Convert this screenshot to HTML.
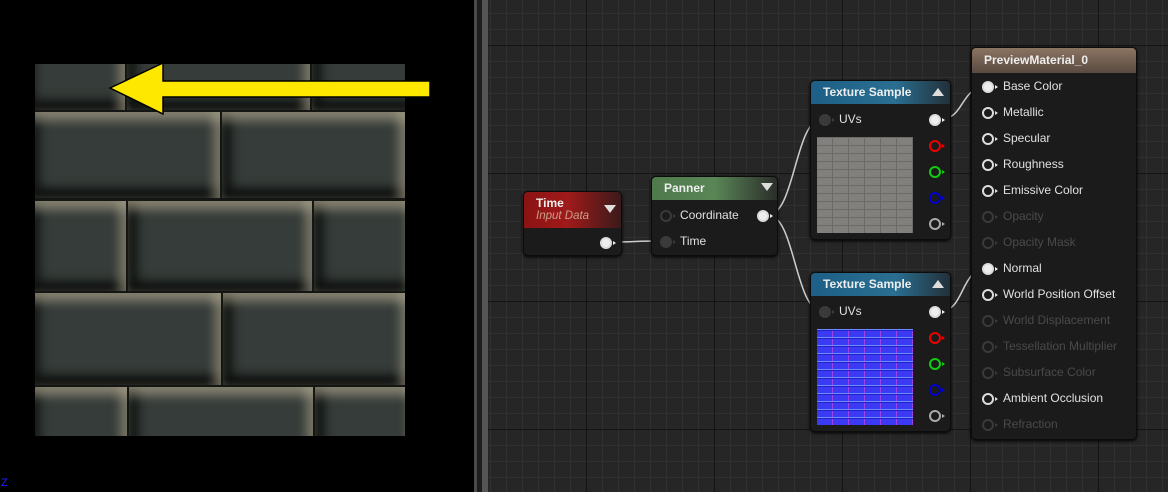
<!DOCTYPE html><html><head><style>
*{margin:0;padding:0;box-sizing:border-box}
body{width:1168px;height:492px;overflow:hidden;background:#000;font-family:"Liberation Sans",sans-serif;position:relative}
.a{position:absolute}
.stone{position:absolute;left:35px;top:64px;width:370px;height:372px;background:#141614;overflow:hidden}
.b{position:absolute;background:#363c39;box-shadow:inset 0 12px 10px -3px rgba(190,180,155,.55),inset -10px 0 9px -2px rgba(185,175,150,.45),inset 0 -12px 10px -2px #0e100f,inset 12px 0 10px -2px #141816}
.grid{position:absolute;left:488px;top:0;width:680px;height:492px;background-color:#262626;
background-image:linear-gradient(#141414 1px,transparent 1px),linear-gradient(90deg,#141414 1px,transparent 1px),linear-gradient(#303030 1px,transparent 1px),linear-gradient(90deg,#303030 1px,transparent 1px);
background-size:128px 128px,128px 128px,16px 16px,16px 16px;background-position:0 45px,98px 0,0 13px,2px 0}
.node{position:absolute;background:#1b1b1b;border:1px solid #0c0c0c;border-radius:5px;box-shadow:0 1px 3px #000;color:#ddd;font-size:12px}
.hd{position:absolute;left:0;top:0;right:0;border-radius:4px 4px 0 0;color:#eee;font-weight:bold;font-size:12px;padding:4px 12px}
.tri{position:absolute;width:0;height:0;border-left:6px solid transparent;border-right:6px solid transparent}
.pin{position:absolute;width:12px;height:12px;border-radius:50%;border:2px solid #ddd}
.pin:after{content:"";position:absolute;right:-6px;top:2px;border-left:3px solid currentColor;border-top:2.5px solid transparent;border-bottom:2.5px solid transparent}
.f{background:#eee;color:#eee}
.o{color:#ddd}
.d{border-color:#3a3a3a;color:#3a3a3a}
.lbl{position:absolute;font-size:12px;color:#e0e0e0}
.dim{color:#4a4a4a}
</style></head><body>
<div class="stone">
<div class="b" style="left:-10px;top:-40px;width:100px;height:86px"></div>
<div class="b" style="left:92px;top:-40px;width:183px;height:86px"></div>
<div class="b" style="left:277px;top:-40px;width:183px;height:86px"></div>
<div class="b" style="left:-5px;top:48px;width:190px;height:86px"></div>
<div class="b" style="left:187px;top:48px;width:183px;height:86px"></div>
<div class="b" style="left:-5px;top:137px;width:96px;height:90px"></div>
<div class="b" style="left:93px;top:137px;width:184px;height:90px"></div>
<div class="b" style="left:279px;top:137px;width:100px;height:90px"></div>
<div class="b" style="left:-5px;top:229px;width:191px;height:92px"></div>
<div class="b" style="left:188px;top:229px;width:184px;height:92px"></div>
<div class="b" style="left:-5px;top:323px;width:97px;height:90px"></div>
<div class="b" style="left:94px;top:323px;width:184px;height:90px"></div>
<div class="b" style="left:280px;top:323px;width:100px;height:90px"></div>
</div>
<svg class="a" style="left:0;top:0" width="474" height="492">
<polygon points="110,88 163,63 163,81 430,81 430,97 163,97 163,114" fill="#ffe800" stroke="#000" stroke-width="1.5"/>
<text x="1" y="486" fill="#2020ff" font-size="11" font-family="Liberation Sans">Z</text>
</svg>
<div class="a" style="left:474px;top:0;width:14px;height:492px;background:#1e1e1e"></div>
<div class="a" style="left:474px;top:0;width:3px;height:492px;background:#4a4a4a"></div>
<div class="a" style="left:482px;top:0;width:6px;height:492px;background:#555"></div>
<div class="grid"></div>
<svg class="a" style="left:0;top:0" width="1168" height="492" fill="none" stroke="#ccc" stroke-width="1.5">
<path d="M611,242 C640,242 630,241 662,241"/>
<path d="M768,215 C795,215 795,119 822,119"/>
<path d="M768,215 C795,215 795,311 822,311"/>
<path d="M941,119 C965,119 960,86 988,86"/>
<path d="M941,311 C965,311 960,268 988,268"/>
</svg>
<div class="node" style="left:523px;top:191px;width:99px;height:65px">
<div class="hd" style="height:36px;background:linear-gradient(90deg,#8b1313 0%,#a01a1a 45%,#3a1a1a 100%)">Time<div style="font-weight:normal;font-style:italic;color:#c9a08a;font-size:11.5px">Input Data</div></div>
<div class="tri" style="left:80px;top:13px;border-top:8px solid #ddd"></div>
<div class="pin f" style="left:76px;top:45px"></div>
</div>
<div class="node" style="left:651px;top:176px;width:127px;height:80px">
<div class="hd" style="height:23px;background:linear-gradient(90deg,#4e7a4c 0%,#5a8656 50%,#2a2e2a 100%)">Panner</div>
<div class="tri" style="left:109px;top:6px;border-top:8px solid #ddd"></div>
<div class="pin d" style="left:8px;top:33px"></div><div class="lbl" style="left:28px;top:31px">Coordinate</div>
<div class="pin f" style="left:105px;top:33px"></div>
<div class="pin" style="left:8px;top:59px;background:#3a3a3a;border-color:#3a3a3a;color:#3a3a3a"></div><div class="lbl" style="left:28px;top:57px">Time</div>
</div>
<div class="node" style="left:810px;top:80px;width:141px;height:160px">
<div class="hd" style="height:23px;background:linear-gradient(90deg,#1d5f86 0%,#2a6f92 60%,#223038 100%)">Texture Sample</div>
<div class="tri" style="left:121px;top:7px;border-bottom:8px solid #ddd"></div>
<div class="pin" style="left:8px;top:33px;background:#3a3a3a;border-color:#3a3a3a;color:#3a3a3a"></div><div class="lbl" style="left:28px;top:31px">UVs</div>
<div class="pin f" style="left:118px;top:33px"></div>
<div class="pin" style="left:118px;top:59px;border-color:#e00;color:#e00"></div>
<div class="pin" style="left:118px;top:85px;border-color:#1c1;color:#1c1"></div>
<div class="pin" style="left:118px;top:111px;border-color:#00c;color:#00c"></div>
<div class="pin o" style="left:118px;top:137px;border-color:#aaa;color:#aaa"></div>
<div class="a" style="left:6px;top:56px;width:96px;height:96px;background-color:#82807c;background-image:repeating-linear-gradient(#6c6a68 0 1px,transparent 1px 8px),repeating-linear-gradient(90deg,transparent 0 15px,#6c6a68 15px 16px)"></div>
</div>
<div class="node" style="left:810px;top:272px;width:141px;height:160px">
<div class="hd" style="height:23px;background:linear-gradient(90deg,#1d5f86 0%,#2a6f92 60%,#223038 100%)">Texture Sample</div>
<div class="tri" style="left:121px;top:7px;border-bottom:8px solid #ddd"></div>
<div class="pin" style="left:8px;top:33px;background:#3a3a3a;border-color:#3a3a3a;color:#3a3a3a"></div><div class="lbl" style="left:28px;top:31px">UVs</div>
<div class="pin f" style="left:118px;top:33px"></div>
<div class="pin" style="left:118px;top:59px;border-color:#e00;color:#e00"></div>
<div class="pin" style="left:118px;top:85px;border-color:#1c1;color:#1c1"></div>
<div class="pin" style="left:118px;top:111px;border-color:#00c;color:#00c"></div>
<div class="pin o" style="left:118px;top:137px;border-color:#aaa;color:#aaa"></div>
<div class="a" style="left:6px;top:56px;width:96px;height:96px;background-color:#3a3af2;background-image:repeating-linear-gradient(#6a8aff 0 1px,#2222c8 1px 2px,transparent 2px 8px),repeating-linear-gradient(90deg,transparent 0 15px,#a040e0 15px 16px)"></div>
</div>
<div class="node" style="left:971px;top:47px;width:166px;height:393px">
<div class="hd" style="height:25px;background:linear-gradient(180deg,#8a7462 0%,#5a4a40 100%);padding-top:5px">PreviewMaterial_0</div>
<div class="pin f" style="left:10px;top:33px"></div><div class="lbl" style="left:31px;top:31px">Base Color</div>
<div class="pin" style="left:10px;top:59px"></div><div class="lbl" style="left:31px;top:57px">Metallic</div>
<div class="pin" style="left:10px;top:85px"></div><div class="lbl" style="left:31px;top:83px">Specular</div>
<div class="pin" style="left:10px;top:111px"></div><div class="lbl" style="left:31px;top:109px">Roughness</div>
<div class="pin" style="left:10px;top:137px"></div><div class="lbl" style="left:31px;top:135px">Emissive Color</div>
<div class="pin d" style="left:10px;top:163px"></div><div class="lbl dim" style="left:31px;top:161px">Opacity</div>
<div class="pin d" style="left:10px;top:189px"></div><div class="lbl dim" style="left:31px;top:187px">Opacity Mask</div>
<div class="pin f" style="left:10px;top:215px"></div><div class="lbl" style="left:31px;top:213px">Normal</div>
<div class="pin" style="left:10px;top:241px"></div><div class="lbl" style="left:31px;top:239px">World Position Offset</div>
<div class="pin d" style="left:10px;top:267px"></div><div class="lbl dim" style="left:31px;top:265px">World Displacement</div>
<div class="pin d" style="left:10px;top:293px"></div><div class="lbl dim" style="left:31px;top:291px">Tessellation Multiplier</div>
<div class="pin d" style="left:10px;top:319px"></div><div class="lbl dim" style="left:31px;top:317px">Subsurface Color</div>
<div class="pin" style="left:10px;top:345px"></div><div class="lbl" style="left:31px;top:343px">Ambient Occlusion</div>
<div class="pin d" style="left:10px;top:371px"></div><div class="lbl dim" style="left:31px;top:369px">Refraction</div>
</div>
</body></html>
